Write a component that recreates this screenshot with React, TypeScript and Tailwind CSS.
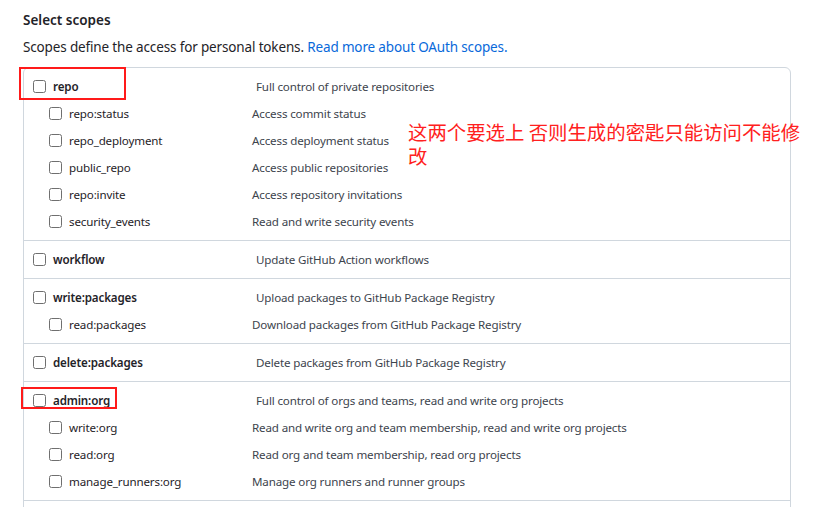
import React from 'react';

interface Scope {
    name: string;
    desc: string;
    children?: { name: string; desc: string }[];
}

const scopes: Scope[] = [
    {
        name: 'repo',
        desc: 'Full control of private repositories',
        children: [
            { name: 'repo:status', desc: 'Access commit status' },
            { name: 'repo_deployment', desc: 'Access deployment status' },
            { name: 'public_repo', desc: 'Access public repositories' },
            { name: 'repo:invite', desc: 'Access repository invitations' },
            { name: 'security_events', desc: 'Read and write security events' },
        ],
    },
    { name: 'workflow', desc: 'Update GitHub Action workflows' },
    {
        name: 'write:packages',
        desc: 'Upload packages to GitHub Package Registry',
        children: [{ name: 'read:packages', desc: 'Download packages from GitHub Package Registry' }],
    },
    { name: 'delete:packages', desc: 'Delete packages from GitHub Package Registry' },
    {
        name: 'admin:org',
        desc: 'Full control of orgs and teams, read and write org projects',
        children: [
            { name: 'write:org', desc: 'Read and write org and team membership, read and write org projects' },
            { name: 'read:org', desc: 'Read org and team membership, read org projects' },
            { name: 'manage_runners:org', desc: 'Manage org runners and runner groups' },
        ],
    },
];

const Checkbox = () => (
    <span className="block w-[13px] h-[13px] shrink-0 rounded-[2.5px] border border-[#6f6f6f] bg-white" />
);

const ScopeRow: React.FC<{ name: string; desc: string; child?: boolean }> = ({ name, desc, child }) => (
    <div className={`flex items-center h-[27px] ${child ? 'pl-[25px]' : 'pl-[9px]'}`}>
        <Checkbox />
        <span
            className={`ml-[7px] ${child ? 'w-[183px] font-normal' : 'w-[203px] font-semibold'} text-[11.6px] tracking-[-0.15px] text-[#1f2328]`}
        >
            {name}
        </span>
        <span className="text-[11.6px] tracking-[-0.15px] text-[#3d444d]">{desc}</span>
    </div>
);

export default function App() {
    return (
        <div
            className="relative w-[816px] h-[507px] overflow-hidden bg-white pl-[23px] pt-[11px]"
            style={{ fontFamily: '"Noto Sans", "Open Sans", sans-serif' }}
        >
            <h3 className="text-[13.5px] font-semibold text-[#1f2328] leading-[18px]">Select scopes</h3>
            <p className="mt-[9px] text-[13.5px] tracking-[-0.15px] text-[#1f2328] leading-[18px]">
                Scopes define the access for personal tokens.{' '}
                <a className="text-[#0969da]">Read more about OAuth scopes.</a>
            </p>
            <div className="mt-[11px] w-[768px] border border-[#d0d7de] rounded-[6px]">
                {scopes.map((s, i) => (
                    <div key={s.name} className={`py-[5px] ${i > 0 ? 'border-t border-[#d0d7de]' : ''}`}>
                        <ScopeRow name={s.name} desc={s.desc} />
                        {s.children?.map((c) => (
                            <ScopeRow key={c.name} name={c.name} desc={c.desc} child />
                        ))}
                    </div>
                ))}
                {/* next section continues below the fold */}
                <div className="h-[38px] border-t border-[#d0d7de]" />
            </div>

            {/* annotations */}
            <div className="absolute left-[19px] top-[67px] w-[107px] h-[33px] border-2 border-[#ff1a1a]" />
            <div className="absolute left-[21px] top-[387px] w-[96px] h-[22px] border-2 border-[#ff1a1a]" />
            <p
                className="absolute left-[408px] top-[120px] w-[398px] text-[19.4px] leading-[24px] text-[#ff2020]"
                style={{ fontFamily: '"Noto Sans CJK SC", sans-serif' }}
            >
                这两个要选上 否则生成的密匙只能访问不能修改
            </p>
        </div>
    );
}
